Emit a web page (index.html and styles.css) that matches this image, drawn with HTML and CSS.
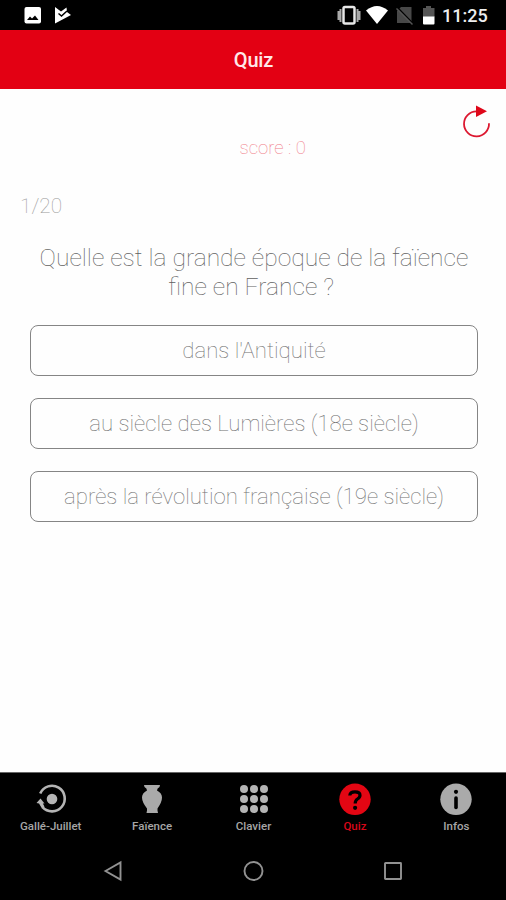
FILE: index.html
```html
<!DOCTYPE html>
<html lang="fr">
<head>
<meta charset="utf-8">
<title>Quiz</title>
<link rel="stylesheet" href="styles.css">
</head>
<body>
<div class="status">
  <svg class="status-left" width="48" height="30" viewBox="0 0 48 30">
    <rect x="0.5" y="7" width="16.500" height="16.500" rx="2" fill="#fff"/>
    <path d="M3 20 L6 16.500 L8 18.500 L11 15.500 L14.500 20Z" fill="#000"/>
    <path d="M31 7 L37 11.500 L42.500 7.500 L43 12 L47 15 L31 23.500Z" fill="#fff"/>
    <path d="M34.500 13.500 L37.500 16 L43 11" fill="none" stroke="#000" stroke-width="1.500"/>
  </svg>
  <svg class="status-right" width="98" height="30" viewBox="0 0 98 30">
    <path d="M1.500 11V20M3.500 9V22M20.500 9V22M22.500 11V20" stroke="#aaa" stroke-width="2"/>
    <rect x="6.500" y="7" width="11" height="16.500" rx="1.500" fill="#000" stroke="#e8e8e8" stroke-width="2.500"/>
    <path d="M29 10.500 Q40 1.500 51 10.500 L40 24Z" fill="#fff"/>
    <path d="M64 7 H74.500 V23 H60 V11Z" fill="#484848"/>
    <path d="M60.500 7.500 L76 23.500" stroke="#000" stroke-width="1.500"/>
    <path d="M59.500 8.500 L75.500 24.500" stroke="#555" stroke-width="1.500"/>
    <path d="M86 8 H89 V6 H94 V8 H97.500 V17 H86Z" fill="#555"/>
    <path d="M86 16.500 H97.500 V23.500 Q97.500 24.500 96.500 24.500 H87 Q86 24.500 86 23.500Z" fill="#fff"/>
  </svg>
  <span class="clock">11:25</span>
</div>
<header class="header">Quiz</header>
<main class="content">
  <svg class="reload" width="30" height="34" viewBox="0 0 30 34">
    <path d="M14.500 6.300 A12.500 12.500 0 1 0 27 18.300" fill="none" stroke="#dc1830" stroke-width="1.800"/>
    <path d="M14 0.500 L25 6.300 L14 12Z" fill="#df0719"/>
  </svg>
  <div class="score">score : 0</div>
  <div class="progress">1/20</div>
  <h1 class="question">Quelle est la grande époque de la faïence<br>fine en France ?&nbsp;</h1>
  <div class="answers">
    <button class="answer">dans l'Antiquité</button>
    <button class="answer">au siècle des Lumières (18e siècle)</button>
    <button class="answer">après la révolution française (19e siècle)</button>
  </div>
</main>
<nav class="tabs">
  <a class="tab">
    <svg width="34" height="34" viewBox="0 0 34 34">
      <path d="M6.200 11.500 A12.800 12.800 0 1 1 8.500 25.200" fill="none" stroke="#b4b4b4" stroke-width="2.600"/>
      <path d="M2.500 21 L6.500 16.500 L10.500 21.500 L8.800 21.500 L10.500 24.500 L8 26.500 L5 21.500Z" fill="#b4b4b4"/>
      <circle cx="18" cy="17" r="5.300" fill="#b4b4b4"/>
    </svg>
    <span>Gallé-Juillet</span>
  </a>
  <a class="tab">
    <svg width="34" height="34" viewBox="0 0 34 34">
      <path d="M9 3 H25 L24.500 5 Q22 6 22 8.500 Q27 11 27 15.500 Q27 20 22.500 26.500 L22.500 28.500 L23 31 H11.500 L12 28.500 L12 26.500 Q7 20 7 15.500 Q7 11 12 8.500 Q12 6 9.500 5Z" fill="#aaa"/>
    </svg>
    <span>Faïence</span>
  </a>
  <a class="tab">
    <svg width="34" height="34" viewBox="0 0 34 34" fill="#b4b4b4">
      <circle cx="7" cy="7" r="4"/><circle cx="17" cy="7" r="4"/><circle cx="27" cy="7" r="4"/>
      <circle cx="7" cy="17" r="4"/><circle cx="17" cy="17" r="4"/><circle cx="27" cy="17" r="4"/>
      <circle cx="7" cy="27" r="4"/><circle cx="17" cy="27" r="4"/><circle cx="27" cy="27" r="4"/>
    </svg>
    <span>Clavier</span>
  </a>
  <a class="tab active">
    <svg width="34" height="34" viewBox="0 0 34 34">
      <circle cx="17" cy="17.300" r="15.700" fill="#e30613"/>
      <path d="M11.800 13.500 Q12 9.800 17 9.800 Q22 9.800 22 13.300 Q22 15.500 19.500 17 Q17.200 18.500 17.200 21.500" fill="none" stroke="#000" stroke-width="3.200"/>
      <circle cx="17.100" cy="25.800" r="2.100" fill="#000"/>
    </svg>
    <span>Quiz</span>
  </a>
  <a class="tab">
    <svg width="34" height="34" viewBox="0 0 34 34">
      <circle cx="17" cy="17.300" r="15.700" fill="#aaa"/>
      <circle cx="17" cy="9.800" r="2.100" fill="#000"/>
      <path d="M17 16 V25.500" stroke="#000" stroke-width="3.600" stroke-linecap="round"/>
    </svg>
    <span>Infos</span>
  </a>
</nav>
<div class="system">
  <svg width="22" height="22" viewBox="0 0 22 22"><path d="M3.500 11 L18.500 2.500 V19.500Z" fill="none" stroke="#929292" stroke-width="1.900"/></svg>
  <svg width="22" height="22" viewBox="0 0 22 22"><circle cx="11.500" cy="11" r="9" fill="none" stroke="#929292" stroke-width="1.900"/></svg>
  <svg width="22" height="22" viewBox="0 0 22 22"><rect x="3" y="3" width="16" height="16" rx="0.500" fill="none" stroke="#929292" stroke-width="1.900"/></svg>
</div>
</body>
</html>
```
FILE: styles.css
```css
* { box-sizing: border-box; }
body {
  margin: 0;
  height: 900px;
  display: flex;
  flex-direction: column;
  overflow: hidden;
  background: #fefefe;
  font-family: Roboto, "Liberation Sans", sans-serif;
}
svg { display: block; flex: none; }
.status {
  height: 30px;
  flex: none;
  display: flex;
  align-items: center;
  padding: 0 18px 0 24px;
  background: #000;
}
.status-right { margin-left: auto; }
.clock {
  width: 46px;
  margin-left: 7px;
  color: #eee;
  font-size: 18px;
  font-weight: 500;
  line-height: 30px;
  padding-top: 2px;
  white-space: nowrap;
}
.header {
  height: 59px;
  flex: none;
  background: #e30013;
  color: #ffe8e8;
  text-align: center;
  font-size: 20px;
  font-weight: 500;
  line-height: 61px;
  letter-spacing: -0.2px;
  padding-left: 1px;
}
.content {
  flex: 1;
  display: flex;
  flex-direction: column;
  padding: 16px 28px 0 30px;
}
.reload { align-self: flex-end; margin-right: -14px; }
.score {
  height: 22px;
  margin-top: -2px;
  padding-left: 209.500px;
  color: #f07c88;
  font-size: 18.500px;
  font-weight: 100;
  line-height: 22px;
  white-space: nowrap;
}
.progress {
  margin: 34px 0 0 -10px;
  color: #999;
  font-size: 20.800px;
  font-weight: 100;
  line-height: 26px;
}
.question {
  margin: 24px -10px 0;
  color: #606060;
  font-size: 24.600px;
  font-weight: 100;
  line-height: 29px;
  text-align: center;
  white-space: nowrap;
}
.answers { margin-top: 24px; display: grid; gap: 22px; }
.answer {
  height: 51px;
  padding: 0;
  border: 1px solid #858585;
  border-radius: 8px;
  background: #fefefe;
  color: #707070;
  font: 100 22.200px/29px Roboto, "Liberation Sans", sans-serif;
  white-space: nowrap;
}
.tabs {
  height: 68px;
  flex: none;
  display: flex;
  margin-right: -1px;
  border-top: 1px solid #666;
  background: #000;
  padding-top: 9px;
}
.tab {
  flex: 1;
  display: flex;
  flex-direction: column;
  align-items: center;
  color: #a6a6a6;
  font-size: 11.500px;
  font-weight: 500;
  line-height: 14px;
}
.tab span { margin-top: 3px; white-space: nowrap; }
.active { color: #d80618; }
.system {
  height: 60px;
  flex: none;
  display: flex;
  justify-content: center;
  gap: 118px;
  padding-top: 20px;
  background: #000;
}
```
